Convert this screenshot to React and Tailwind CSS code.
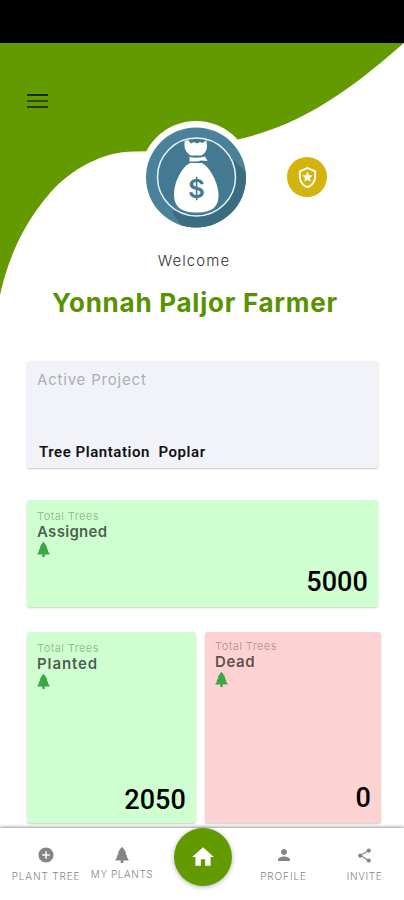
import React from 'react';
import { MdAddCircle, MdHome, MdOutlineLocalPolice, MdPerson, MdShare } from 'react-icons/md';

function HeaderCurve() {
  return (
    <svg className="absolute left-0 top-0 w-[404px] h-[252px]" viewBox="0 0 404 252" aria-hidden="true">
      <path fill="#639a00" d="M0 0H404C360 38 310 80 238 96.500C205 106 170 108 134 108.500C103 108.500 71 126 50 150C23 181 8 216 0 252Z" />
    </svg>
  );
}

function TreeIcon({ className }) {
  return (
    <svg className={className} viewBox="0 0 14 16" fill="currentColor" aria-hidden="true">
      <path d="M7 0C7.500 0 8.200 1 9.200 2.600L11 5.600L10.400 6.200L12.300 9.400L11.700 10L13.600 12.600C13.800 13.100 13.600 13.400 13 13.400H8.300V16H5.700V13.400H1C0.400 13.400 0.200 13.100 0.400 12.600L2.300 10L1.700 9.400L3.600 6.200L3 5.600L4.800 2.600C5.800 1 6.500 0 7 0Z" />
    </svg>
  );
}

function MoneyBag() {
  return (
    <svg className="w-[112px] h-[112px]" viewBox="0 0 112 112" aria-hidden="true">
      <defs>
        <clipPath id="disc">
          <circle cx="56" cy="56.500" r="50" />
        </clipPath>
      </defs>
      <circle cx="56" cy="56" r="56" fill="#fff" />
      <circle cx="56" cy="56.500" r="50" fill="#4b829b" />
      <path d="M94 39L120 65V120H52L32 91Z" fill="#3b6c80" clipPath="url(#disc)" />
      <circle cx="56.500" cy="56" r="39" fill="#447a91" stroke="#e8f3f8" strokeWidth="1.500" />
      {/* neck of the bag */}
      <path d="M44.500 20.500L48 19L51 22.500L54 21L57 22.500L60 21L62.500 22L66.500 19L67 25C67 30 64 33 61.500 34.500H50.500C47 32 44.500 29 44.500 24Z" fill="#fff" />
      <path d="M49.500 36C54 37 60 37 65 35.500L67.500 40L61 39.500L58 40.500H49.500Z" fill="#fff" />
      <path d="M50 42H62C70 46 78 62 78.500 73C79 86 72 91.500 56.500 91.500C41 91.500 34 86 34 73C34 61 42 46 50 42Z" fill="#fff" />
      <text x="56.500" y="76.500" textAnchor="middle" fontFamily="Inter, sans-serif" fontSize="26" fontWeight="600" fill="#447a91">$</text>
    </svg>
  );
}

function TreeCard({ title, count, className, titleClassName, countClassName }) {
  return (
    <section className={`flex flex-col shrink-0 rounded-[3px] shadow-[0_1px_2px_rgba(0,0,0,0.2)] pl-2.5 ${className}`}>
      <span className="text-[11px] leading-[13px] tracking-[0.4px] text-black/30">Total Trees</span>
      <h2 className={`text-[15px] leading-[17px] font-semibold text-black/65 ${titleClassName}`}>{title}</h2>
      <TreeIcon className="mt-0.5 w-[13px] h-[15px] text-[#3da648]" />
      <span className={`mt-auto self-end font-[Roboto] text-[27px] leading-8 font-medium tracking-[0.1px] text-black ${countClassName}`}>{count}</span>
    </section>
  );
}

function NavItem({ icon: Icon, label, className, iconClassName, labelClassName }) {
  return (
    <a href="#" className={`flex flex-col items-center text-[#858585] ${className}`}>
      <Icon className={iconClassName} />
      <span className={`text-[10px] leading-3 font-light whitespace-nowrap ${labelClassName}`}>{label}</span>
    </a>
  );
}

export default function App() {
  return (
    <div className="w-[404px] h-[900px] overflow-hidden flex flex-col bg-white font-[Inter,sans-serif]">
      <div className="h-[43px] shrink-0 bg-black" />

      <div className="relative h-[785px] shrink-0 overflow-hidden">
        <HeaderCurve />

        <header className="relative h-[318px]">
          <button className="flex flex-col gap-1 w-[21px] pt-[51px] ml-[27px]" aria-label="Menu">
            <span className="h-0.5 w-full bg-[#152b00]" />
            <span className="h-0.5 w-full bg-[#2d4b04]" />
            <span className="h-0.5 w-full bg-[#203900]" />
          </button>
          <div className="flex items-center h-28 mt-[13px] pl-[140px]">
            <MoneyBag />
            <div className="flex items-center justify-center size-10 rounded-full bg-[#d5b30d] ml-[35px]">
              <MdOutlineLocalPolice className="size-[23px] text-white" />
            </div>
          </div>
          <p className="w-[388px] mt-[18px] text-center text-[15px] leading-5 font-light tracking-[1.1px] text-[#333]">Welcome</p>
          <h1 className="w-[390px] mt-4 text-center text-[26px] leading-8 font-bold tracking-[0.75px] text-[#579200]">Yonnah Paljor Farmer</h1>
        </header>

        <main className="relative px-[27px]">
          <section className="flex flex-col h-[107px] w-[351px] rounded-[3px] bg-[#f1f3f8] shadow-[0_1px_2px_rgba(0,0,0,0.22)] px-2.5 pt-[9px] pb-1.5">
            <span className="text-[15px] leading-5 tracking-[0.8px] text-[#adaeb3]">Active Project</span>
            <span className="mt-auto ml-0.5 font-[Roboto] text-[15px] leading-5 font-semibold tracking-[0.55px] whitespace-pre text-[#111]">Tree Plantation  Poplar</span>
          </section>
          <TreeCard title="Assigned" count="5000" className="mt-[32px] w-[351px] h-[107px] pt-2.5 bg-[#cfffd1]" titleClassName="tracking-[0.3px]" countClassName="mr-2.5 mb-[9px]" />
          <div className="flex gap-[9px] mt-[25px]">
            <TreeCard title="Planted" count="2050" className="w-[169px] h-[191px] pt-2.5 bg-[#cfffd1]" titleClassName="tracking-[0.9px]" countClassName="mr-2.5 mb-[7px]" />
            <TreeCard title="Dead" count="0" className="w-[176px] h-[191px] pt-2 bg-[#fdd2d3]" titleClassName="tracking-[0.6px]" countClassName="mr-2.5 mb-[9px]" />
          </div>
        </main>
      </div>

      <nav className="relative flex h-[72px] shrink-0 bg-white shadow-[0_-1px_3px_rgba(0,0,0,0.4)]">
        <NavItem icon={MdAddCircle} label="PLANT TREE" className="w-[92px] pt-[18px]" iconClassName="size-[18px]" labelClassName="mt-1.5 tracking-[0.85px]" />
        <NavItem icon={TreeIcon} label="MY PLANTS" className="w-[60px] pt-[19px]" iconClassName="w-[14px] h-4" labelClassName="mt-[5px] tracking-[0.55px]" />
        <a href="#" aria-label="Home" className="flex items-center justify-center size-[58px] ml-[22px] rounded-full bg-[#639a00] shadow-[0_1px_5px_rgba(0,0,0,0.3)]">
          <MdHome className="size-[26px] text-white" />
        </a>
        <NavItem icon={MdPerson} label="PROFILE" className="w-[103px] pt-[18px]" iconClassName="size-[18px]" labelClassName="mt-1.5 tracking-[0.9px]" />
        <NavItem icon={MdShare} label="INVITE" className="w-[59px] pt-[19px]" iconClassName="size-[17px]" labelClassName="mt-1.5 tracking-[0.6px]" />
      </nav>
    </div>
  );
}
